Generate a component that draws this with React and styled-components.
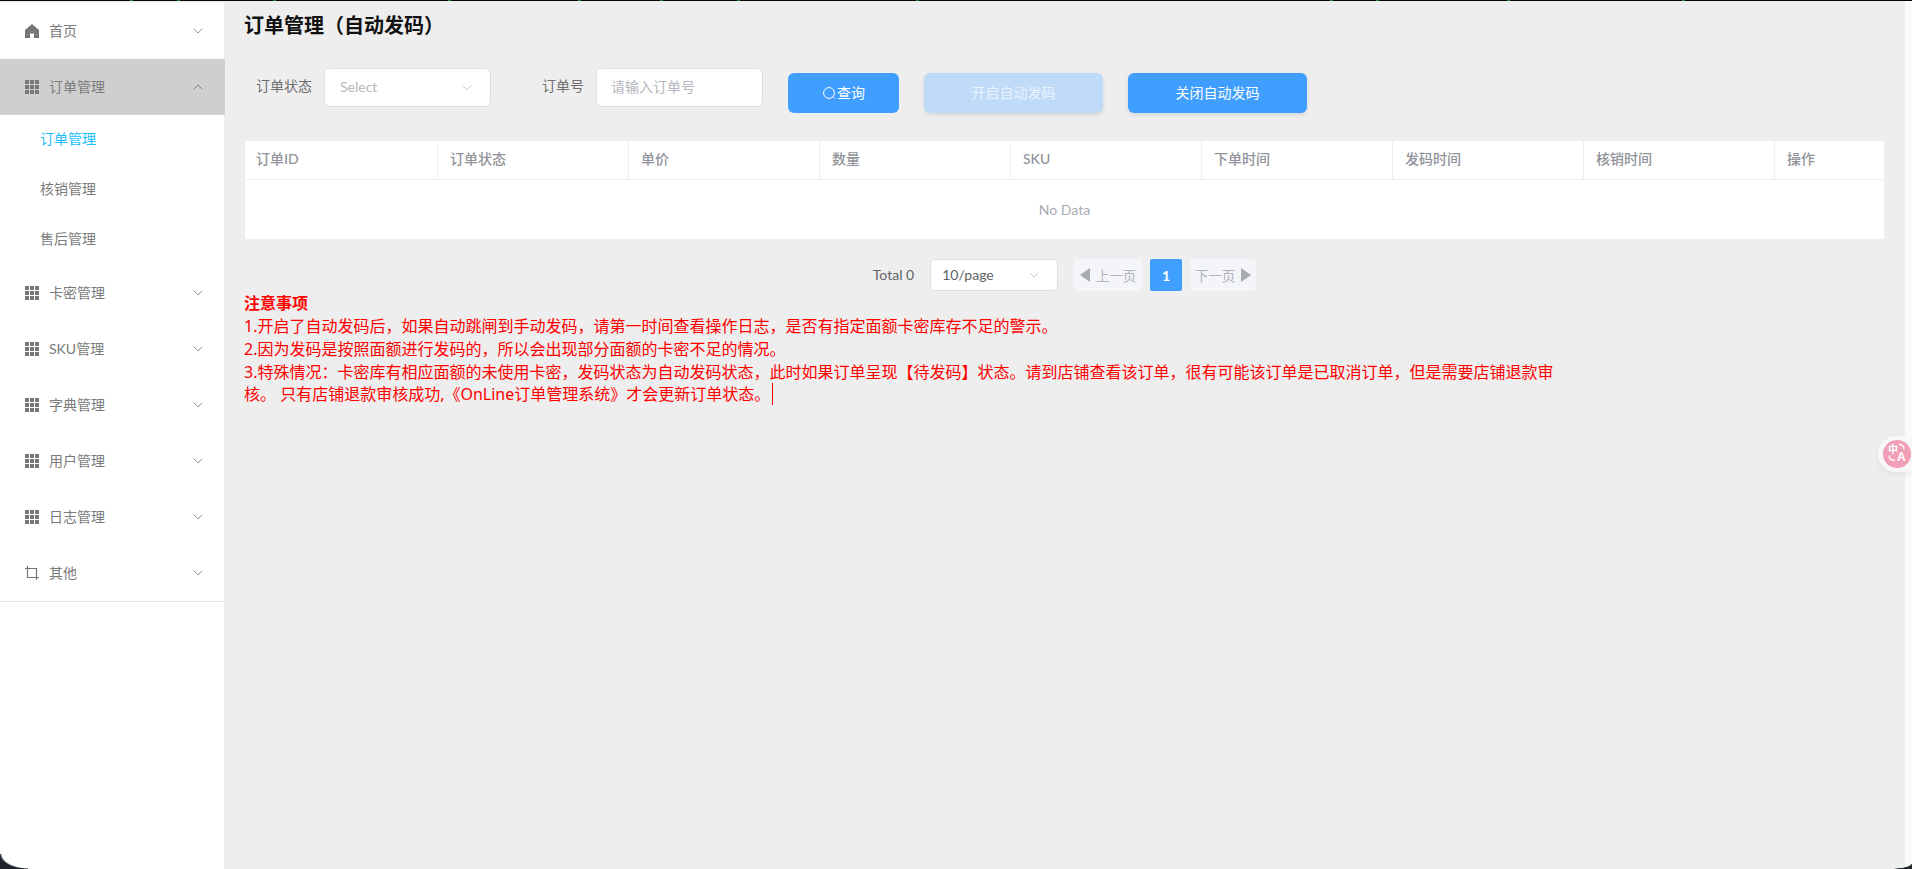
import React from 'react'
import styled, { createGlobalStyle } from 'styled-components'

const GlobalStyle = createGlobalStyle`
  html, body {
    margin: 0;
    height: 100%;
    overflow: hidden;
    background: #eeeeee;
  }
  body {
    font-family: Lato, "Noto Sans CJK SC", "Noto Sans", sans-serif;
    font-size: 14px;
  }
  * { box-sizing: border-box; }
`

const specks = [130, 177, 273, 448, 578, 660, 737, 916, 1330, 1376, 1507, 1682]

const stripImage = specks
  .map((x) => `linear-gradient(#0c8f34, #0c8f34) ${x}px 0 / 3px 1px no-repeat`)
  .join(', ')

const Page = styled.div`
  width: 1912px;
  height: 869px;
  display: flex;
  flex-direction: column;
  position: relative;
  overflow: hidden;
  background: #eeeeee;
`
const TopLine = styled.div`
  height: 1px;
  flex: none;
  background: ${stripImage}, #050505;
`
const Body = styled.div`
  flex: 1;
  display: flex;
  min-height: 0;
`
const Sidebar = styled.aside`
  width: 225px;
  flex: none;
  background: #ffffff;
  border-top: 2px solid #f1f1f1;
  border-right: 1px solid #ececec;
`
const Menu = styled.nav`
  border-bottom: 1px solid #e8e8e8;
  height: 599px;
  margin-right: -1px;
`
const MenuItem = styled.div`
  height: 56px;
  display: flex;
  align-items: center;
  padding: 0 22px 2px 25px;
  color: #7b7b7b;
  background: ${(p) => (p.$open ? '#cfcfcf' : 'transparent')};
  svg.lead {
    width: 14px;
    height: 14px;
    margin-top: 2px;
    margin-right: 10px;
    flex: none;
  }
  svg.arrow {
    margin-top: 2px;
    margin-left: auto;
    flex: none;
  }
`
const SubItem = styled.div`
  height: 50px;
  display: flex;
  align-items: center;
  padding: 0 0 4px 40px;
  color: ${(p) => (p.$active ? '#1dbdfb' : '#7b7b7b')};
`
const Main = styled.main`
  flex: 1;
  min-width: 0;
  padding-left: 20px;
  padding-right: 21px;
`
const ScrollTrack = styled.div`
  width: 7px;
  flex: none;
  background: #fafafa;
`
const Title = styled.h1`
  margin: 0 0 0 -1px;
  height: 50px;
  padding-top: 9px;
  font-size: 20px;
  font-weight: 600;
  line-height: 30px;
  color: #111111;
`
const FilterBar = styled.div`
  height: 57px;
  margin-top: 17px;
  margin-bottom: 16px;
  padding-left: 11px;
  display: flex;
  align-items: flex-start;
`
const FieldLabel = styled.label`
  height: 39px;
  line-height: 36px;
  color: #707070;
  margin-right: 12px;
  margin-left: ${(p) => p.$offset || 0}px;
`
const SelectBox = styled.div`
  width: ${(p) => p.$width}px;
  height: ${(p) => p.$height}px;
  padding: 0 18px 2px ${(p) => p.$pad}px;
  display: flex;
  align-items: center;
  justify-content: space-between;
  background: #ffffff;
  border: 1px solid #dcdfe6;
  border-radius: 5px;
  color: ${(p) => p.$color};
  svg { margin-top: 2px; }
`
const TextInput = styled.input`
  width: 167px;
  height: 39px;
  padding: 0 14px 2px;
  background: #ffffff;
  border: 1px solid #dcdfe6;
  border-radius: 5px;
  font: inherit;
  outline: none;
  &::placeholder { color: #b4b7be; opacity: 1; }
`
const Button = styled.button`
  width: ${(p) => p.$width}px;
  height: 40px;
  margin-top: 5px;
  margin-left: 25px;
  padding: 0 0 2px;
  display: flex;
  align-items: center;
  justify-content: center;
  border: none;
  border-radius: 6px;
  font: inherit;
  color: ${(p) => (p.disabled ? '#e8f2fd' : '#ffffff')};
  background: ${(p) => (p.disabled ? '#c0dbf7' : '#409eff')};
  box-shadow: ${(p) => (p.$raised ? '0 2px 4px rgba(0, 0, 0, 0.1)' : 'none')};
  svg { margin-top: 2px; margin-right: 1px; }
`
const Table = styled.div`
  background: #ffffff;
  width: 1639px;
`
const HeaderRow = styled.div`
  display: grid;
  grid-template-columns: 193px repeat(7, 191px) 1fr;
  height: 39px;
  border-bottom: 1px solid #ebeef5;
`
const HeaderCell = styled.div`
  padding-left: 12px;
  line-height: 35px;
  font-weight: 500;
  color: #909399;
  border-right: 1px solid #ebeef5;
  &:first-child { padding-left: 11px; }
  &:last-child { border-right: none; }
`
const EmptyRow = styled.div`
  height: 59px;
  display: flex;
  align-items: center;
  justify-content: center;
  color: #a8abb2;
`
const Pager = styled.div`
  margin-top: 20px;
  height: 32px;
  width: 1639px;
  display: flex;
  justify-content: center;
  align-items: center;
`
const PagerTotal = styled.span`
  color: #606266;
  margin-right: 16px;
  padding-bottom: 2px;
`
const PagerStep = styled.div`
  height: 32px;
  width: ${(p) => p.$width}px;
  margin-left: ${(p) => p.$gap}px;
  padding-bottom: 1px;
  display: flex;
  align-items: center;
  justify-content: center;
  gap: 6px;
  background: #f4f5f9;
  border-radius: 2px;
  color: #b0b3ba;
  font-size: 13.4px;
`
const PagerNumber = styled.div`
  height: 32px;
  width: 32px;
  margin-left: 8px;
  display: flex;
  align-items: center;
  justify-content: center;
  background: #409eff;
  border-radius: 2px;
  color: #ffffff;
  font-weight: 700;
`
const Notes = styled.div`
  width: 1332px;
  margin-top: 1px;
  margin-left: -1px;
  font-family: "Noto Sans", "Noto Sans CJK SC", sans-serif;
  font-size: 16px;
  line-height: 22.86px;
  color: #ff0000;
  strong { font-weight: 700; }
`
const Caret = styled.span`
  display: inline-block;
  width: 1px;
  height: 22px;
  margin-left: 2px;
  vertical-align: -5px;
  background: #ff0000;
`
const TranslateDock = styled.div`
  position: absolute;
  right: 0;
  top: 436px;
  width: 34px;
  height: 36px;
  padding: 4px 0 0 5px;
  background: #f8f8f8;
  border-radius: 18px 0 0 18px;
  box-shadow: 0 2px 6px rgba(0, 0, 0, 0.06);
`
const TranslateBadge = styled.div`
  width: 28px;
  height: 28px;
  border-radius: 50%;
  background: #f09fb7;
  position: relative;
  color: #ffffff;
  font-weight: 700;
  svg { position: absolute; inset: 0; }
`
const BadgeHan = styled.span`
  position: absolute;
  left: 5px;
  top: 2px;
  font-size: 10px;
  line-height: 14px;
`
const BadgeLatin = styled.span`
  position: absolute;
  left: 14px;
  top: 10px;
  font-size: 12px;
  line-height: 14px;
  font-family: "Liberation Sans", sans-serif;
`
const ScreenCorner = styled.div`
  position: absolute;
  bottom: 0;
  width: ${(p) => p.$w}px;
  height: ${(p) => p.$h}px;
  ${(p) => (p.$right ? 'right: 0;' : 'left: 0;')}
  background: radial-gradient(
    ${(p) => p.$w}px ${(p) => p.$h}px at ${(p) => (p.$right ? '0 0' : '100% 0')},
    transparent 92%,
    #20242c 100%
  );
`

const Arrow = ({ up, size = 10, color = '#8a8a8a' }) => (
  <svg className="arrow" width={size} height={size * 0.6} viewBox="0 0 10 6" fill="none">
    <path
      d={up ? 'M.6 5.4 5 1l4.4 4.4' : 'M.6.6 5 5 9.4.6'}
      stroke={color}
      strokeWidth="0.9"
    />
  </svg>
)

const HomeIcon = () => (
  <svg className="lead" viewBox="0 0 14 14" fill="#777777">
    <path d="M7 0 0 6v8h5V9.4h4V14h5V6L7 0Z" />
  </svg>
)

const GridIcon = () => (
  <svg className="lead" viewBox="0 0 14 14" fill="#777777">
    {[0, 5, 10].map((y) =>
      [0, 5, 10].map((x) => <rect key={`${x}-${y}`} x={x} y={y} width="4" height="4" />)
    )}
  </svg>
)

const CropIcon = () => (
  <svg className="lead" viewBox="0 0 14 14" fill="none" stroke="#777777" strokeWidth="1.2">
    <path d="M0 2.5h11.5V14" />
    <path d="M2.5 0v11.5H14" />
  </svg>
)

const SearchIcon = () => (
  <svg width="14" height="14" viewBox="0 0 14 14" fill="none" stroke="#ffffff" strokeWidth="1">
    <circle cx="7" cy="7" r="5.4" />
    <path d="M10.8 10.8 12.6 12.6" />
  </svg>
)

const PagerTriangle = ({ right }) => (
  <svg width="10" height="14" viewBox="0 0 10 14" fill="#a8abb2">
    <path d={right ? 'M0 0 10 7 0 14Z' : 'M10 0 0 7 10 14Z'} />
  </svg>
)

const menuAfter = [
  { label: '卡密管理', icon: <GridIcon /> },
  { label: 'SKU管理', icon: <GridIcon /> },
  { label: '字典管理', icon: <GridIcon /> },
  { label: '用户管理', icon: <GridIcon /> },
  { label: '日志管理', icon: <GridIcon /> },
  { label: '其他', icon: <CropIcon /> },
]

const columns = ['订单ID', '订单状态', '单价', '数量', 'SKU', '下单时间', '发码时间', '核销时间', '操作']

const App = () => (
  <Page>
    <GlobalStyle />
    <TopLine />
    <Body>
      <Sidebar>
        <Menu>
          <MenuItem>
            <HomeIcon />
            首页
            <Arrow />
          </MenuItem>
          <MenuItem $open>
            <GridIcon />
            订单管理
            <Arrow up color="#777777" />
          </MenuItem>
          <SubItem $active>订单管理</SubItem>
          <SubItem>核销管理</SubItem>
          <SubItem>售后管理</SubItem>
          {menuAfter.map((m) => (
            <MenuItem key={m.label}>
              {m.icon}
              {m.label}
              <Arrow />
            </MenuItem>
          ))}
        </Menu>
      </Sidebar>
      <Main>
        <Title>订单管理（自动发码）</Title>
        <FilterBar>
          <FieldLabel>订单状态</FieldLabel>
          <SelectBox $width={167} $height={39} $pad={15} $color="#b4b7be">
            Select
            <Arrow color="#c0c4cc" />
          </SelectBox>
          <FieldLabel $offset={51}>订单号</FieldLabel>
          <TextInput placeholder="请输入订单号" />
          <Button $width={111}>
            <SearchIcon />
            查询
          </Button>
          <Button $width={179} $raised disabled>开启自动发码</Button>
          <Button $width={179} $raised>关闭自动发码</Button>
        </FilterBar>
        <Table>
          <HeaderRow>
            {columns.map((c) => (
              <HeaderCell key={c}>{c}</HeaderCell>
            ))}
          </HeaderRow>
          <EmptyRow>No Data</EmptyRow>
        </Table>
        <Pager>
          <PagerTotal>Total 0</PagerTotal>
          <SelectBox $width={128} $height={32} $pad={11} $color="#606266">
            10/page
            <Arrow color="#c0c4cc" />
          </SelectBox>
          <PagerStep $width={68} $gap={16}>
            <PagerTriangle />
            上一页
          </PagerStep>
          <PagerNumber>1</PagerNumber>
          <PagerStep $width={66} $gap={8}>
            下一页
            <PagerTriangle right />
          </PagerStep>
        </Pager>
        <Notes>
          <strong>注意事项</strong>
          <br />
          1.开启了自动发码后，如果自动跳闸到手动发码，请第一时间查看操作日志，是否有指定面额卡密库存不足的警示。
          <br />
          2.因为发码是按照面额进行发码的，所以会出现部分面额的卡密不足的情况。
          <br />
          3.特殊情况：卡密库有相应面额的未使用卡密，发码状态为自动发码状态，此时如果订单呈现【待发码】状态。请到店铺查看该订单，很有可能该订单是已取消订单，但是需要店铺退款审核。 只有店铺退款审核成功,《OnLine订单管理系统》才会更新订单状态。
          <Caret />
        </Notes>
      </Main>
      <ScrollTrack />
    </Body>
    <TranslateDock>
      <TranslateBadge>
        <BadgeHan>中</BadgeHan>
        <BadgeLatin>A</BadgeLatin>
        <svg viewBox="0 0 28 28" fill="none" stroke="#ffffff" strokeWidth="1.3">
          <path d="M16 4.5c3 0 5 2 5 5" />
          <path d="M6 15.5c0 3 2 5 6 5" />
        </svg>
      </TranslateBadge>
    </TranslateDock>
    <ScreenCorner $w={28} $h={15} />
    <ScreenCorner $right $w={23} $h={5} />
  </Page>
)

export default App
